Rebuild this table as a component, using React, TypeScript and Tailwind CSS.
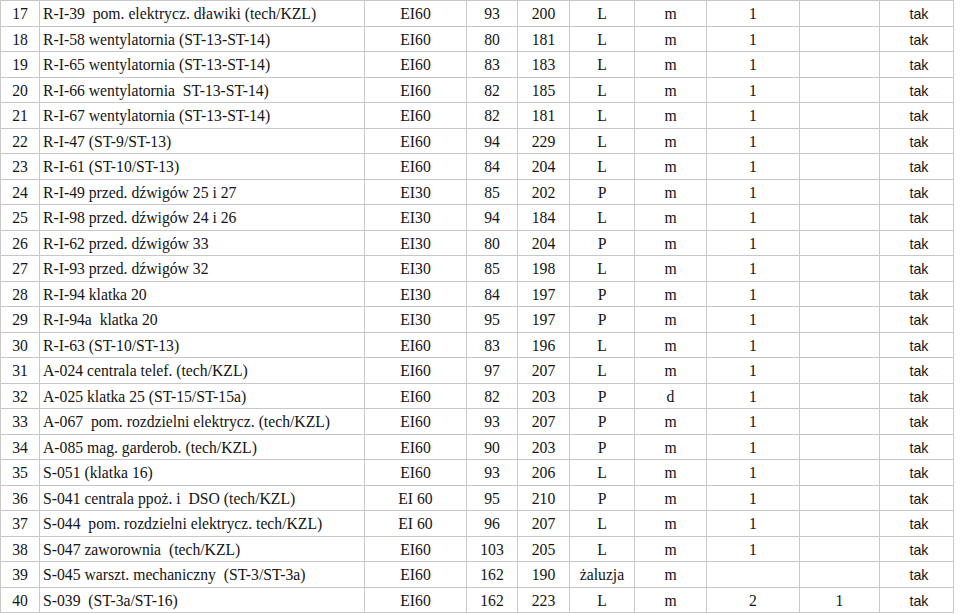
import React from "react";

type Row = [string, string, string, string, string, string, string, string, string, string];

const rows: Row[] = [
  ["17", "R-I-39  pom. elektrycz. dławiki (tech/KZL)", "EI60", "93", "200", "L", "m", "1", "", "tak"],
  ["18", "R-I-58 wentylatornia (ST-13-ST-14)", "EI60", "80", "181", "L", "m", "1", "", "tak"],
  ["19", "R-I-65 wentylatornia (ST-13-ST-14)", "EI60", "83", "183", "L", "m", "1", "", "tak"],
  ["20", "R-I-66 wentylatornia  ST-13-ST-14)", "EI60", "82", "185", "L", "m", "1", "", "tak"],
  ["21", "R-I-67 wentylatornia (ST-13-ST-14)", "EI60", "82", "181", "L", "m", "1", "", "tak"],
  ["22", "R-I-47 (ST-9/ST-13)", "EI60", "94", "229", "L", "m", "1", "", "tak"],
  ["23", "R-I-61 (ST-10/ST-13)", "EI60", "84", "204", "L", "m", "1", "", "tak"],
  ["24", "R-I-49 przed. dźwigów 25 i 27", "EI30", "85", "202", "P", "m", "1", "", "tak"],
  ["25", "R-I-98 przed. dźwigów 24 i 26", "EI30", "94", "184", "L", "m", "1", "", "tak"],
  ["26", "R-I-62 przed. dźwigów 33", "EI30", "80", "204", "P", "m", "1", "", "tak"],
  ["27", "R-I-93 przed. dźwigów 32", "EI30", "85", "198", "L", "m", "1", "", "tak"],
  ["28", "R-I-94 klatka 20", "EI30", "84", "197", "P", "m", "1", "", "tak"],
  ["29", "R-I-94a  klatka 20", "EI30", "95", "197", "P", "m", "1", "", "tak"],
  ["30", "R-I-63 (ST-10/ST-13)", "EI60", "83", "196", "L", "m", "1", "", "tak"],
  ["31", "A-024 centrala telef. (tech/KZL)", "EI60", "97", "207", "L", "m", "1", "", "tak"],
  ["32", "A-025 klatka 25 (ST-15/ST-15a)", "EI60", "82", "203", "P", "d", "1", "", "tak"],
  ["33", "A-067  pom. rozdzielni elektrycz. (tech/KZL)", "EI60", "93", "207", "P", "m", "1", "", "tak"],
  ["34", "A-085 mag. garderob. (tech/KZL)", "EI60", "90", "203", "P", "m", "1", "", "tak"],
  ["35", "S-051 (klatka 16)", "EI60", "93", "206", "L", "m", "1", "", "tak"],
  ["36", "S-041 centrala ppoż. i  DSO (tech/KZL)", "EI 60", "95", "210", "P", "m", "1", "", "tak"],
  ["37", "S-044  pom. rozdzielni elektrycz. tech/KZL)", "EI 60", "96", "207", "L", "m", "1", "", "tak"],
  ["38", "S-047 zaworownia  (tech/KZL)", "EI60", "103", "205", "L", "m", "1", "", "tak"],
  ["39", "S-045 warszt. mechaniczny  (ST-3/ST-3a)", "EI60", "162", "190", "żaluzja", "m", "", "", "tak"],
  ["40", "S-039  (ST-3a/ST-16)", "EI60", "162", "223", "L", "m", "2", "1", "tak"],
];

export default function App() {
  return (
    <div className="w-[960px] h-[614px] bg-white overflow-hidden">
      <div
        className="w-[954px] border-l border-t border-[#c8c8c8] text-[#141414] text-[15.7px] leading-none"
        style={{ fontFamily: '"Liberation Serif", "Times New Roman", serif' }}
      >
        {rows.map((r) => (
          <div
            key={r[0]}
            className="grid grid-cols-[39px_325px_102px_51px_52px_65px_72px_93px_80px_74px] h-[25.5px]"
          >
            {r.map((c, i) => (
              <div
                key={i}
                className={
                  "border-r border-b border-[#c8c8c8] flex items-center pt-[2px] whitespace-pre " +
                  (i === 1 ? "justify-start pl-[3px]" : "justify-center") +
                  (i === 9 ? " pl-[5px] text-[14.2px] [font-family:'Liberation_Sans',Arial,sans-serif]" : "")
                }
              >
                {c}
              </div>
            ))}
          </div>
        ))}
      </div>
    </div>
  );
}
